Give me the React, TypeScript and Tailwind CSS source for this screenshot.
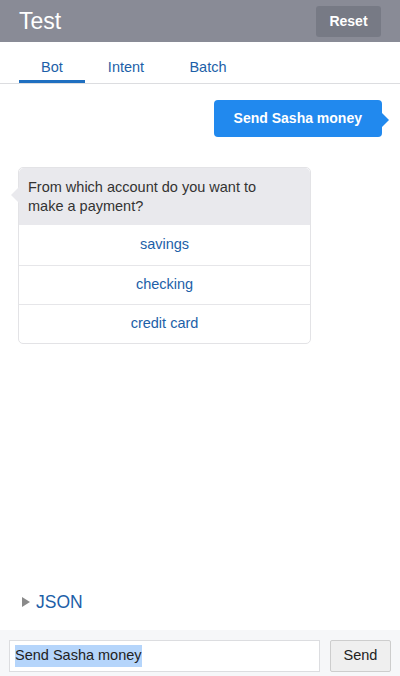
const font = { fontFamily: '"Liberation Sans", Arial, sans-serif' };

function Tabs() {
  const tabs = ['Bot', 'Intent', 'Batch'];
  return (
    <div className="flex h-[42px] items-stretch border-b border-[#dcdde0] pl-[19px]">
      {tabs.map((t, i) => (
        <div
          key={t}
          className={
            i === 0
              ? 'flex w-[66px] items-center justify-center border-b-[3px] border-[#1f6fc0] pt-[13px] text-[14.5px] text-[#1d5fa8]'
              : 'flex w-[82px] items-center justify-center border-b-[3px] border-transparent pt-[13px] text-[14.5px] text-[#1d5fa8]'
          }
        >
          {t}
        </div>
      ))}
    </div>
  );
}

function UserBubble({ text }: { text: string }) {
  return (
    <div className="flex justify-end pr-[18px]">
      <div className="relative flex h-[37px] items-center rounded-[4px] bg-[#2189ee] px-[20px] text-[14px] font-bold text-white">
        {text}
        <span className="absolute right-[-7px] top-[12px] h-0 w-0 border-y-[8px] border-l-[8px] border-y-transparent border-l-[#2189ee]" />
      </div>
    </div>
  );
}

function BotCard() {
  const options = ['savings', 'checking', 'credit card'];
  return (
    <div className="relative ml-[18px] w-[293px] rounded-[5px] border border-[#e3e3e6] bg-white">
      <span className="absolute left-[-8px] top-[19px] h-0 w-0 border-y-[8px] border-r-[8px] border-y-transparent border-r-[#e9e9ed]" />
      <div className="rounded-t-[5px] bg-[#e9e9ed] pb-[9px] pl-[9px] pr-[30px] pt-[10px] text-[14.5px] leading-[19px] text-[#333333]">
        From which account do you want to make a payment?
      </div>
      {options.map((o, i) => (
        <div
          key={o}
          className={
            i === 0
              ? 'flex h-[40px] items-center justify-center text-[14.5px] text-[#1d5fa8]'
              : 'flex h-[39px] items-center justify-center border-t border-[#e6e6e9] text-[14.5px] text-[#1d5fa8]'
          }
        >
          {o}
        </div>
      ))}
    </div>
  );
}

export default function App() {
  return (
    <div className="flex h-[676px] w-[400px] flex-col bg-white" style={font}>
      <div className="flex h-[42px] items-center justify-between bg-[#898b96] pl-[19px] pr-[19px]">
        <span className="text-[23px] font-light text-white">Test</span>
        <button className="h-[31px] w-[65px] rounded-[3px] bg-[#777a85] text-[14px] font-bold text-white">
          Reset
        </button>
      </div>
      <Tabs />
      <div className="flex flex-1 flex-col pt-[16px]">
        <UserBubble text="Send Sasha money" />
        <div className="mt-[30px]">
          <BotCard />
        </div>
        <div className="flex-1" />
        <div className="flex items-center gap-[6px] pb-[15px] pl-[22px]">
          <span className="h-0 w-0 border-y-[5px] border-l-[8px] border-y-transparent border-l-[#8a8a8a]" />
          <span className="text-[17.5px] text-[#1d5fa8]">JSON</span>
        </div>
      </div>
      <div className="flex h-[46px] items-start gap-[10px] bg-[#f6f7f9] px-[9px] pt-[10px]">
        <div className="flex h-[32px] flex-1 items-center border border-[#dcdde0] bg-white px-[5px] text-[14.5px] text-[#222]">
          <span className="bg-[#b5d5fb]">Send Sasha money</span>
        </div>
        <button className="h-[32px] w-[61px] rounded-[2px] border border-[#cdcdcd] bg-[#efefef] text-[14.5px] text-[#222]">
          Send
        </button>
      </div>
    </div>
  );
}
